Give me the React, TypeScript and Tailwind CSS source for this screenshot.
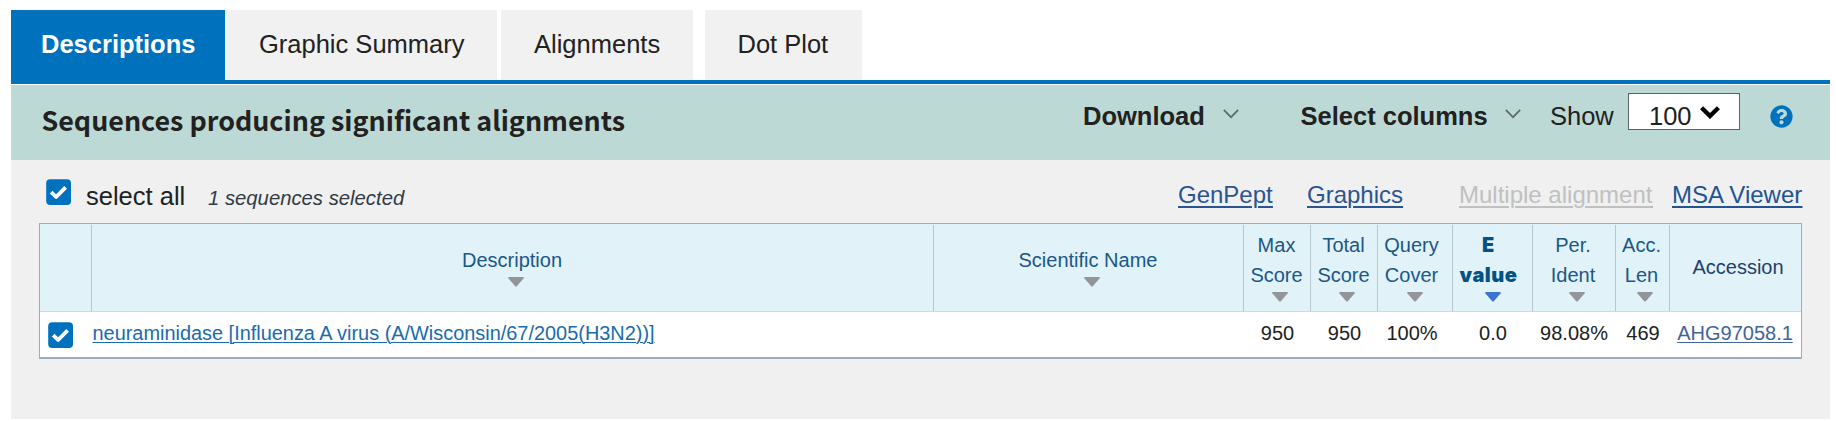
import React from "react";
import { FaQuestionCircle } from "react-icons/fa";

type Column = {
  lines: string[];
  value: React.ReactNode;
  labelClass?: string;
  caretClass?: string;
  valueClass?: string;
  active?: boolean;
};

const columns: Column[] = [
  { lines: ["Max", "Score"], value: "950", labelClass: "pr-px", caretClass: "ml-[6px]", valueClass: "pl-0.5" },
  { lines: ["Total", "Score"], value: "950", labelClass: "pr-px", caretClass: "ml-[6px]", valueClass: "pl-0.5" },
  { lines: ["Query", "Cover"], value: "100%", labelClass: "pr-[7px]", valueClass: "pr-[5px]" },
  { lines: ["E", "value"], value: "0.0", labelClass: "pr-[8px]", valueClass: "pl-[2px]", active: true },
  { lines: ["Per.", "Ident"], value: "98.08%", labelClass: "pr-0.5", caretClass: "ml-[5px]", valueClass: "pl-px" },
  { lines: ["Acc.", "Len"], value: "469", labelClass: "pr-0.5", caretClass: "ml-[5px]", valueClass: "pl-[2px]" },
];

function Checkbox() {
  return (
    <svg width="25" height="26" viewBox="0 0 25 26" className="block shrink-0">
      <rect x="0.2" y="0.2" width="24.8" height="25.8" rx="4" fill="#0071bc" />
      <path d="M5.2 13.2L10.1 18L19.6 8.4" fill="none" stroke="#fff" strokeWidth="3.8" strokeLinejoin="round" />
    </svg>
  );
}

function Caret({ className = "", active = false }: { className?: string; active?: boolean }) {
  return (
    <svg width="16" height="10" viewBox="0 0 16 10" className={"mt-0.5 block " + className}>
      <path
        d="M1.2 0H14.8Q16 0 15.7 1.3L9 8.9Q8 9.9 7 8.9L0.3 1.3Q0 0 1.2 0Z"
        fill={active ? "#3f73d1" : "#939599"}
      />
    </svg>
  );
}

function ThinChevron() {
  return (
    <svg width="16" height="10" viewBox="0 0 16 10" className="mt-2 block">
      <path d="M0.8 0.8L8 8.2L15.2 0.8" fill="none" stroke="#5b6b6b" strokeWidth="1.7" />
    </svg>
  );
}

function Heading({ col }: { col: Column }) {
  return (
    <div className="mt-px flex flex-col items-center justify-center border-l border-[#b9c6d2] pb-1">
      <div className={"text-center " + (col.labelClass ?? "")}>
        {col.lines.map((l) => (
          <div
            key={l}
            className={
              col.active
                ? "font-['Inter'] text-[20px] leading-[30px] font-black tracking-[0.5px] text-[#035185]"
                : "leading-[30px]"
            }
          >
            {l}
          </div>
        ))}
      </div>
      <Caret className={col.caretClass} active={col.active} />
    </div>
  );
}

const grid = "grid grid-cols-[51px_842px_310px_67px_67px_75px_80px_83px_54px_132px]";

export default function App() {
  return (
    <div className="h-[421px] w-[1836px] overflow-hidden bg-white pt-2.5 pl-[11px] font-['Liberation_Sans',sans-serif] text-[#212121]">
      <div className="w-[1819px]">
        <nav className="flex h-[74px] border-b-4 border-[#0071bc] text-[25.5px] leading-[30px]">
          <div className="h-[70px] w-[214px] bg-[#0071bc] pt-[19px] pl-[30px] font-bold text-white">
            Descriptions
          </div>
          <div className="h-[70px] w-[272px] bg-[#f1f1f1] pt-[19px] pl-[34px]">Graphic Summary</div>
          <div className="ml-1 h-[70px] w-[192px] bg-[#f1f1f1] pt-[19px] pl-[33px]">Alignments</div>
          <div className="ml-3 h-[70px] w-[157px] bg-[#f1f1f1] pt-[19px] pl-[32.5px]">Dot Plot</div>
        </nav>

        <header className="mt-px flex h-[75px] items-start bg-[#bdd9d5] text-[25.5px] leading-[30px]">
          <h1 className="w-[1041px] pt-[20px] pl-[30.5px] font-['Noto_Sans_CJK_SC',sans-serif] text-[26.87px] font-bold">
            Sequences producing significant alignments
          </h1>
          <div className="flex w-[218px] pt-4 pl-[31px]">
            <span className="w-[140px] font-bold">Download</span>
            <ThinChevron />
          </div>
          <div className="flex w-[280px] pt-4 pl-[30.5px] whitespace-nowrap">
            <span className="w-[204.5px] font-bold">Select columns</span>
            <ThinChevron />
          </div>
          <span className="w-[78px] pt-4">Show</span>
          <div className="mt-2 flex h-[37px] w-[112px] border border-[#5b616b] bg-white pt-[7px] pl-5">
            <span className="w-[51px]">100</span>
            <svg width="20" height="13" viewBox="0 0 20 13" className="mt-[5px] block">
              <path d="M1.6 1.8L10 10L18.4 1.8" fill="none" stroke="#000" strokeWidth="4.4" />
            </svg>
          </div>
          <FaQuestionCircle className="mt-5 ml-[30px] size-[23px] text-[#0071bc]" />
        </header>

        <main className="h-[259px] bg-[#f0f0f0] pl-7">
          <div className="flex h-[63px] items-start pl-[7px]">
            <div className="mt-[19px]">
              <Checkbox />
            </div>
            <span className="mt-[21px] ml-[15px] w-[122px] text-[25.5px] leading-[30px]">select all</span>
            <em className="mt-[23px] w-[970px] text-[20.3px] leading-[30px] text-[#323a45]">
              1 sequences selected
            </em>
            <div className="mt-5 flex text-2xl leading-[30px] whitespace-nowrap text-[#2a5591] underline decoration-2 underline-offset-[2.5px]">
              <a className="w-[129px]">GenPept</a>
              <a className="w-[152px]">Graphics</a>
              <a className="w-[213px] text-[#c0c0c0]">Multiple alignment</a>
              <a className="text-[#205493]">MSA Viewer</a>
            </div>
          </div>

          <section className="w-[1763px] border border-b-2 border-[#9aadc0] bg-white text-xl">
            <div className={grid + " h-[88px] border-b border-[#cfd9e2] bg-[#e1f2f8] text-[#1b5788]"}>
              <div />
              <Heading
                col={{ lines: ["Description"], value: "", labelClass: "pr-px", caretClass: "ml-[6px]" }}
              />
              <Heading
                col={{ lines: ["Scientific Name"], value: "", labelClass: "pr-px", caretClass: "ml-[6px]" }}
              />
              {columns.map((c, i) => (
                <Heading key={i} col={c} />
              ))}
              <div className="mt-px flex items-center justify-center border-l border-[#b9c6d2] pb-0.5 pl-[5px] text-[#1f4069]">
                Accession
              </div>
            </div>
            <div className={grid + " h-[45px] items-center pb-[3px] leading-[30px]"}>
              <div className="pt-[3px] pl-2">
                <Checkbox />
              </div>
              <a className="pl-[1.5px] text-[19.92px] text-[#1a6bad] underline decoration-1 underline-offset-2">
                neuraminidase [Influenza A virus (A/Wisconsin/67/2005(H3N2))]
              </a>
              <div />
              {columns.map((c, i) => (
                <div key={i} className={"text-center " + (c.valueClass ?? "")}>
                  {c.value}
                </div>
              ))}
              <a className="text-center text-[#3f659b] underline decoration-1 underline-offset-2">
                AHG97058.1
              </a>
            </div>
          </section>
        </main>
      </div>
    </div>
  );
}
